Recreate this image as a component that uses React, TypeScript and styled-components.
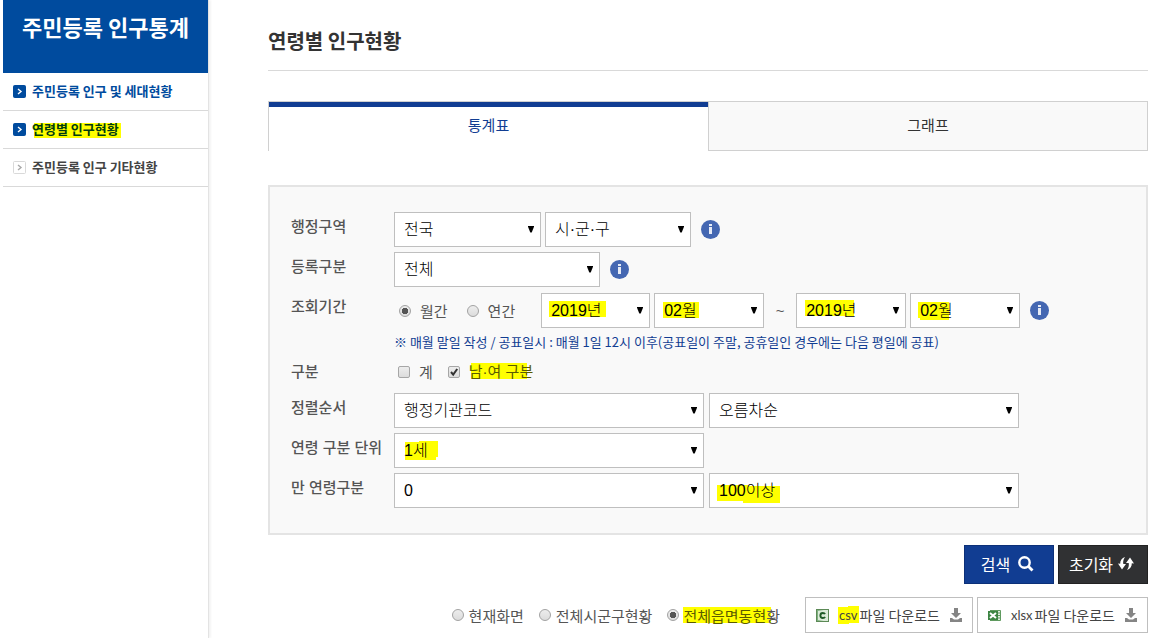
import React from "react";
import styled, { createGlobalStyle, css } from "styled-components";

type Rect = [x: number, y: number, width: number, height: number];

const YELLOW = "#ffff00";
const KOREAN = `"Noto Sans CJK KR", sans-serif`;

const highlight = (rects: Rect[] | undefined, base: string) =>
  rects
    ? css`
        background: ${rects
          .map(([x, y, w, h]) => `linear-gradient(${YELLOW}, ${YELLOW}) ${x}px ${y}px / ${w}px ${h}px no-repeat`)
          .join(", ")}, linear-gradient(${base}, ${base});
      `
    : css`
        background: ${base};
      `;

const GlobalStyle = createGlobalStyle`
  *, *::before, *::after { box-sizing: border-box; }
  body {
    margin: 0;
    background: #fff;
    color: #555;
    font-family: ${KOREAN};
    font-size: 15px;
  }
`;

const Page = styled.div`
  display: flex;
  min-height: 100vh;
  padding: 0 6px 0 3px;
`;

const Sidebar = styled.aside`
  flex: 0 0 206px;
  border-right: 1px solid #e3e3e3;
  box-shadow: 2px 0 2px #f4f4f4;
`;

const SidebarTitle = styled.h2`
  height: 73px;
  margin: 0;
  padding-top: 10px;
  background: #004b9e;
  color: #fff;
  font-size: 22px;
  font-weight: 700;
  line-height: 32px;
  text-align: center;
`;

const Menu = styled.ul`
  margin: 0;
  padding: 0;
  list-style: none;
`;

const MenuItem = styled.li`
  border-bottom: 1px solid #d9d9d9;
`;

const MenuLink = styled.a<{ $color: string }>`
  display: flex;
  align-items: center;
  gap: 6px;
  height: 37px;
  padding-left: 10px;
  color: ${(p) => p.$color};
  font-size: 13px;
  font-weight: 700;
  text-decoration: none;
`;

const MenuText = styled.span`
  padding-bottom: 2px;
`;

const Marked = styled.span<{ $rects?: Rect[] }>`
  padding-right: 4px;
  line-height: 20px;
  ${(p) => highlight(p.$rects, "transparent")}
`;

const Olive = styled.span`
  color: #5a5a00;
`;

const Main = styled.main`
  flex: 1;
  min-width: 0;
  margin-left: 59px;
`;

const PageTitle = styled.h1`
  margin: 0 0 30px;
  padding: 26px 0 14px;
  border-bottom: 1px solid #d9d9d9;
  color: #333;
  font-size: 20px;
  font-weight: 700;
  line-height: 30px;
`;

const Tabs = styled.div`
  display: grid;
  grid-template-columns: 1fr 1fr;
  margin-bottom: 34px;
`;

const Tab = styled.button<{ $active?: boolean }>`
  height: 50px;
  padding: 0 0 4px;
  border: 1px solid #d0d0d0;
  background: #f9f9f9;
  color: #333;
  font-family: ${KOREAN};
  font-size: 15px;
  ${(p) =>
    p.$active &&
    css`
      border-right: 0;
      border-bottom: 0;
      background: #fff;
      box-shadow: inset 0 5px 0 #113d92;
      color: #113d92;
    `}
`;

const SearchPanel = styled.section`
  display: grid;
  gap: 5px;
  padding: 25px 21px;
  border: 2px solid #e4e4e4;
  background: #f9f9f9;
  font-family: "Liberation Sans", ${KOREAN};
`;

const Row = styled.div`
  display: grid;
  grid-template-columns: 103px 1fr;
  align-items: start;
  min-height: 31px;
`;

const RowLabel = styled.div`
  font-weight: 500;
  line-height: 30px;
`;

const Controls = styled.div<{ $gap?: number }>`
  display: flex;
  align-items: center;
  gap: ${(p) => p.$gap ?? 4}px;
  min-height: 29px;
`;

const PeriodFields = styled.div`
  padding-top: 1px;
`;

const SelectBox = styled.div<{ $width: number }>`
  display: grid;
  flex: 0 1 ${(p) => p.$width}px;
  min-width: 0;
  align-items: center;

  > * {
    grid-area: 1 / 1;
  }

  > svg {
    justify-self: end;
    margin-right: 7px;
    pointer-events: none;
  }
`;

const NativeSelect = styled.select<{ $rects?: Rect[] }>`
  appearance: none;
  width: 100%;
  height: 35px;
  padding: 0 16px 0 9px;
  border: 1px solid #bfbfbf;
  border-radius: 0;
  color: #000;
  font-family: "Liberation Sans", ${KOREAN};
  font-size: 16px;
  font-weight: 300;
  ${(p) => highlight(p.$rects, "#fff")}
`;

const Note = styled.p`
  margin: 3px 0 0;
  color: #113d92;
  font-family: ${KOREAN};
  font-size: 13px;
  line-height: 21px;
`;

const Tilde = styled.span`
  width: 24px;
  text-align: center;
`;

const Choice = styled.label<{ $gap: number }>`
  display: flex;
  align-items: center;
  gap: ${(p) => p.$gap}px;
`;

const ChoiceSet = styled.div<{ $gap: number; $inset?: number; $end?: number }>`
  display: flex;
  gap: ${(p) => p.$gap}px;
  margin-left: ${(p) => p.$inset ?? 0}px;
  margin-right: ${(p) => p.$end ?? 0}px;
`;

const Radio = styled.input.attrs({ type: "radio" })`
  appearance: none;
  width: 12px;
  height: 12px;
  margin: 0;
  border: 1px solid #a2a2a2;
  border-radius: 50%;
  background: linear-gradient(#ededed, #dcdcdc);

  &:checked {
    background: radial-gradient(circle, #555 0 3px, transparent 3px), linear-gradient(#ededed, #dcdcdc);
  }
`;

const CheckFrame = styled.span`
  display: grid;

  > * {
    grid-area: 1 / 1;
  }

  > svg {
    pointer-events: none;
  }
`;

const Checkbox = styled.input.attrs({ type: "checkbox" })`
  appearance: none;
  width: 12px;
  height: 12px;
  margin: 0;
  border: 1px solid #a6a6a6;
  border-radius: 2px;
  background: linear-gradient(#ededed, #dcdcdc);
`;

const InfoButton = styled.button`
  display: flex;
  margin-left: 6px;
  padding: 0;
  border: 0;
  background: none;
`;

const Actions = styled.div`
  display: flex;
  justify-content: flex-end;
  align-items: center;
  gap: 4px;
  margin-top: 10px;
`;

const ActionButton = styled.button<{ $dark?: boolean }>`
  display: flex;
  align-items: center;
  justify-content: center;
  gap: ${(p) => (p.$dark ? 5 : 8)}px;
  width: 90px;
  height: 39px;
  padding: 0 3px 2px 0;
  border: 1px solid ${(p) => (p.$dark ? "#222" : "#0c3078")};
  background: ${(p) => (p.$dark ? "#303133" : "#113d92")};
  color: #fff;
  font-family: ${KOREAN};
  font-size: 16px;
`;

const Downloads = styled(Actions)`
  margin-top: 13px;
`;

const DownloadButton = styled.button`
  display: flex;
  align-items: center;
  height: 36px;
  padding: 0 10px;
  border: 1px solid #bfbfbf;
  background: #fff;
  color: #444;
  font-family: ${KOREAN};
  font-size: 14px;
`;

const FileType = styled.span<{ $rects?: Rect[] }>`
  margin-left: 8px;
  padding: 0 2px;
  font-family: Lato, ${KOREAN};
  font-size: 13px;
  line-height: 20px;
  ${(p) => highlight(p.$rects, "transparent")}
`;

const DownloadText = styled.span`
  margin-right: 10px;
`;

function MenuMark({ active }: { active: boolean }) {
  return (
    <svg width="13" height="13" viewBox="0 0 13 13" aria-hidden="true">
      <rect x=".5" y=".5" width="12" height="12" rx="1" fill={active ? "#004b9e" : "#fff"} stroke={active ? "#004b9e" : "#d9d9d9"} />
      <path d="M5 4l3 2.5L5 9" fill="none" stroke={active ? "#fff" : "#a8a8a8"} strokeWidth="1.4" />
    </svg>
  );
}

function Select({ label, value, width, rects }: { label: string; value: string; width: number; rects?: Rect[] }) {
  return (
    <SelectBox $width={width}>
      <NativeSelect aria-label={label} $rects={rects}>
        <option>{value}</option>
      </NativeSelect>
      <svg width="6" height="7" viewBox="0 0 6 7" aria-hidden="true">
        <path d="M0 0h6v.8L3.700 6.500H2.300L0 .8z" fill="#000" />
      </svg>
    </SelectBox>
  );
}

function Info() {
  return (
    <InfoButton type="button" aria-label="도움말">
      <svg width="19" height="19" viewBox="0 0 19 19" aria-hidden="true">
        <circle cx="9.5" cy="9.5" r="9.5" fill="#4467b2" />
        <path d="M8 4h3v2H8zM8 7h3v7H8z" fill="#e6ebf6" />
      </svg>
    </InfoButton>
  );
}

function DownloadIcon() {
  return (
    <svg width="12" height="14" viewBox="0 0 12 14" aria-hidden="true">
      <path d="M4 0h4v5h3L6 10 1 5h3zM0 10h2l2 1.500h4L10 10h2v4H0z" fill="#858585" />
    </svg>
  );
}

export default function App() {
  return (
    <>
      <GlobalStyle />
      <Page>
        <Sidebar>
          <SidebarTitle>주민등록 인구통계</SidebarTitle>
          <nav>
            <Menu>
              <MenuItem>
                <MenuLink href="#household" $color="#004b9e">
                  <MenuMark active />
                  <MenuText>주민등록 인구 및 세대현황</MenuText>
                </MenuLink>
              </MenuItem>
              <MenuItem>
                <MenuLink href="#age" $color="#003c10">
                  <MenuMark active />
                  <MenuText>
                    <Marked $rects={[[2, 4, 87, 16]]}>연령별 인구현황</Marked>
                  </MenuText>
                </MenuLink>
              </MenuItem>
              <MenuItem>
                <MenuLink href="#etc" $color="#444">
                  <MenuMark active={false} />
                  <MenuText>주민등록 인구 기타현황</MenuText>
                </MenuLink>
              </MenuItem>
            </Menu>
          </nav>
        </Sidebar>

        <Main>
          <PageTitle>연령별 인구현황</PageTitle>
          <Tabs role="tablist">
            <Tab role="tab" aria-selected="true" $active>
              통계표
            </Tab>
            <Tab role="tab" aria-selected="false">
              그래프
            </Tab>
          </Tabs>

          <SearchPanel>
            <Row>
              <RowLabel>행정구역</RowLabel>
              <Controls>
                <Select label="시도" value="전국" width={147} />
                <Select label="시군구" value="시·군·구" width={146} />
                <Info />
              </Controls>
            </Row>
            <Row>
              <RowLabel>등록구분</RowLabel>
              <Controls>
                <Select label="등록구분" value="전체" width={206} />
                <Info />
              </Controls>
            </Row>
            <Row>
              <RowLabel>조회기간</RowLabel>
              <PeriodFields>
                <Controls>
                  <ChoiceSet $gap={19} $inset={5} $end={22}>
                    <Choice $gap={9}>
                      <Radio name="period" defaultChecked />
                      월간
                    </Choice>
                    <Choice $gap={9}>
                      <Radio name="period" />
                      연간
                    </Choice>
                  </ChoiceSet>
                  <Select label="시작 연도" value="2019년" width={109} rects={[[7, 7, 57, 16]]} />
                  <Select label="시작 월" value="02월" width={110} rects={[[8, 8, 36, 16]]} />
                  <Tilde>~</Tilde>
                  <Select label="종료 연도" value="2019년" width={110} rects={[[8, 6, 49, 16]]} />
                  <Select label="종료 월" value="02월" width={110} rects={[[7, 8, 31, 16], [9, 10, 29, 16]]} />
                  <Info />
                </Controls>
                <Note>※ 매월 말일 작성 / 공표일시 : 매월 1일 12시 이후(공표일이 주말, 공휴일인 경우에는 다음 평일에 공표)</Note>
              </PeriodFields>
            </Row>
            <Row>
              <RowLabel>구분</RowLabel>
              <Controls>
                <ChoiceSet $gap={15} $inset={4}>
                  <Choice $gap={9}>
                    <Checkbox />
                    계
                  </Choice>
                  <Choice $gap={9}>
                    <CheckFrame>
                      <Checkbox defaultChecked />
                      <svg width="12" height="12" viewBox="0 0 12 12" aria-hidden="true">
                        <path d="M3 6l2.2 2.6L9.2 3" fill="none" stroke="#333" strokeWidth="2" />
                      </svg>
                    </CheckFrame>
                    <Marked $rects={[[2, 1, 56, 16]]}>
                      <Olive>남·여 구분</Olive>
                    </Marked>
                  </Choice>
                </ChoiceSet>
              </Controls>
            </Row>
            <Row>
              <RowLabel>정렬순서</RowLabel>
              <Controls $gap={5}>
                <Select label="정렬 기준" value="행정기관코드" width={310} />
                <Select label="정렬 방향" value="오름차순" width={310} />
              </Controls>
            </Row>
            <Row>
              <RowLabel>연령 구분 단위</RowLabel>
              <Controls>
                <Select label="연령 구분 단위" value="1세" width={310} rects={[[10, 8, 31, 18], [24, 7, 19, 16]]} />
              </Controls>
            </Row>
            <Row>
              <RowLabel>만 연령구분</RowLabel>
              <Controls $gap={5}>
                <Select label="시작 연령" value="0" width={310} />
                <Select label="종료 연령" value="100이상" width={310} rects={[[7, 11, 31, 16], [33, 12, 37, 17]]} />
              </Controls>
            </Row>
          </SearchPanel>

          <Actions>
            <ActionButton type="button">
              검색
              <svg width="16" height="16" viewBox="0 0 16 16" aria-hidden="true">
                <circle cx="6.500" cy="6.500" r="5.200" fill="none" stroke="#fff" strokeWidth="2.400" />
                <path d="M10.300 10.300l4.200 4.200" stroke="#fff" strokeWidth="2.800" />
              </svg>
            </ActionButton>
            <ActionButton type="button" $dark>
              초기화
              <svg width="16" height="13" viewBox="0 0 16 13" aria-hidden="true">
                <path d="M7 0C5 3 5 5 5.300 7H8l-4 5.500L0 6.500l2.200.2C2 3.500 4 1 7 0zM9 13c2-3 2-5 1.700-7H8l4-5.500 4 6-2.200-.2C14 9.500 12 12 9 13z" fill="#fff" />
              </svg>
            </ActionButton>
          </Actions>

          <Downloads>
            <ChoiceSet $gap={15} $end={17}>
              <Choice $gap={5}>
                <Radio name="scope" />
                현재화면
              </Choice>
              <Choice $gap={5}>
                <Radio name="scope" />
                전체시군구현황
              </Choice>
              <Choice $gap={4}>
                <Radio name="scope" defaultChecked />
                <span>
                  <Marked $rects={[[0, 2, 88, 16]]}>
                    <Olive>전체읍면동현</Olive>황
                  </Marked>
                </span>
              </Choice>
            </ChoiceSet>
            <DownloadButton type="button">
              <svg width="13" height="13" viewBox="0 0 13 13" aria-hidden="true">
                <defs>
                  <linearGradient id="csvSheet">
                    <stop offset="0" stopColor="#6fa571" />
                    <stop offset=".6" stopColor="#dcebd9" />
                  </linearGradient>
                </defs>
                <rect x=".5" y=".5" width="12" height="12" fill="url(#csvSheet)" stroke="#5c8a56" />
                <path d="M2 2h9v9H2z" fill="#dcebd9" />
                <path d="M9 5.200C8.600 4.300 7.800 4 6.800 4 5.300 4 4.400 5 4.400 6.500S5.300 9 6.800 9C7.800 9 8.600 8.700 9 7.800" fill="none" stroke="#1f5a26" strokeWidth="1.900" />
              </svg>
              <FileType $rects={[[1, 2, 11, 17], [11, 1, 11, 17]]}>csv</FileType>
              <DownloadText>파일 다운로드</DownloadText>
              <DownloadIcon />
            </DownloadButton>
            <DownloadButton type="button">
              <svg width="13" height="13" viewBox="0 0 13 13" aria-hidden="true">
                <path d="M2 1h11v11H2z" fill="#e3ede1" />
                <path d="M2 1.500h10.500v10H2" fill="none" stroke="#5f9a5f" />
                <path d="M10 4h2M10 6.500h2M10 9h2" stroke="#5f9a5f" />
                <path d="M0 2h10v9H0z" fill="#3d8543" />
                <path d="M2 4l6 5M8 4L2 9" stroke="#fff" strokeWidth="2" />
              </svg>
              <FileType>xlsx</FileType>
              <DownloadText>파일 다운로드</DownloadText>
              <DownloadIcon />
            </DownloadButton>
          </Downloads>
        </Main>
      </Page>
    </>
  );
}
